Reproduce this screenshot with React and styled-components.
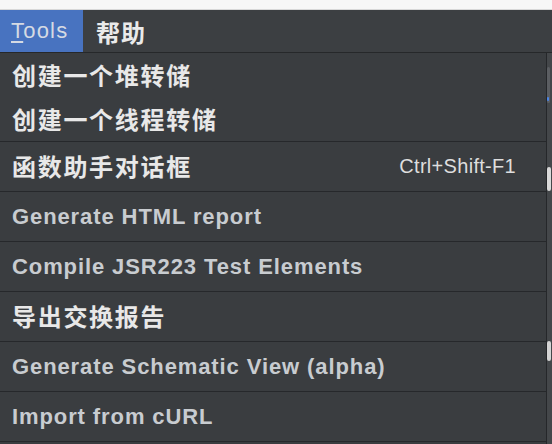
import React from "react";
import styled, { createGlobalStyle } from "styled-components";

const Global = createGlobalStyle`
  html, body { margin: 0; padding: 0; background: #3a3d40; }
  body { width: 552px; height: 444px; overflow: hidden; }
`;

const Page = styled.div`
  width: 552px;
  height: 444px;
  display: flex;
  flex-direction: column;
  background: #3a3d40;
  overflow: hidden;
`;

const TopStrip = styled.div`
  height: 10px;
  background: #f7f7f7;
  border-bottom: 1px solid #d8d8d8;
  box-sizing: border-box;
`;

const MenuBar = styled.div`
  height: 43px;
  display: flex;
  align-items: stretch;
  background: #3c3f42;
  border-bottom: 1px solid #26282a;
  box-sizing: border-box;
`;

const MenuTitle = styled.div`
  display: flex;
  align-items: center;
  padding: ${(p) => (p.$active ? "0 12px 0 11px" : "0 10px 0 13px")};
  width: ${(p) => (p.$active ? "83px" : "auto")};
  box-sizing: border-box;
  background: ${(p) => (p.$active ? "#4873c0" : "transparent")};
  color: ${(p) => (p.$active ? "#d5dae3" : "#eaeaea")};
  font-family: ${(p) =>
    p.$cjk
      ? '"Noto Sans CJK SC", sans-serif'
      : '"Liberation Sans", Arial, sans-serif'};
  font-weight: ${(p) => (p.$cjk ? 700 : 400)};
  font-size: ${(p) => (p.$cjk ? "24px" : "22px")};
  letter-spacing: ${(p) => (p.$cjk ? "1px" : "1.2px")};
`;

const Mnemonic = styled.span`
  text-decoration: underline;
  text-underline-offset: 3px;
`;

const Body = styled.div`
  flex: 1;
  display: flex;
  min-height: 0;
`;

const Dropdown = styled.div`
  width: 547px;
  display: flex;
  flex-direction: column;
  background: #3a3d40;
  border-right: 1px solid #25272a;
  box-sizing: border-box;
`;

const Group = styled.div`
  display: flex;
  flex-direction: column;
  border-bottom: 1px solid #26282b;
`;

const Item = styled.div`
  height: ${(p) => (p.$compact ? "44px" : "50px")};
  display: flex;
  align-items: center;
  justify-content: space-between;
  padding: 0 30px 0 12px;
  box-sizing: border-box;
  flex-shrink: 0;
  border-bottom: ${(p) => (p.$plain ? "none" : "1px solid #26282b")};
`;

const Label = styled.span`
  white-space: nowrap;
  font-family: ${(p) =>
    p.$cjk
      ? '"Noto Sans CJK SC", sans-serif'
      : '"Liberation Sans", Arial, sans-serif'};
  font-weight: 700;
  font-size: ${(p) => (p.$cjk ? "24px" : "22px")};
  letter-spacing: ${(p) => (p.$cjk ? "1.7px" : "0.9px")};
  color: ${(p) => (p.$cjk ? "#e8e8e8" : "#c8ccd0")};
  margin-top: ${(p) => (p.$cjk ? "-2px" : "0")};
`;

const Shortcut = styled.span`
  font-family: "Liberation Sans", Arial, sans-serif;
  font-size: 20px;
  color: #dedede;
  letter-spacing: 0.3px;
`;

const SideStrip = styled.div`
  flex: 1;
  background: #44474a;
  display: flex;
  flex-direction: column;
  align-items: flex-start;
`;

const SideBlock = styled.div`
  width: ${(p) => p.$w}px;
  height: ${(p) => p.$h}px;
  margin-top: ${(p) => p.$top}px;
  background: ${(p) => p.$c};
  border-radius: 2px;
`;

const groupOne = ["创建一个堆转储", "创建一个线程转储"];

const rows = [
  { label: "函数助手对话框", cjk: true, shortcut: "Ctrl+Shift-F1" },
  { label: "Generate HTML report" },
  { label: "Compile JSR223 Test Elements" },
  { label: "导出交换报告", cjk: true },
  { label: "Generate Schematic View (alpha)" },
  { label: "Import from cURL" },
];

export default function App() {
  return (
    <>
      <Global />
      <Page>
        <TopStrip />
        <MenuBar>
          <MenuTitle $active>
            <span>
              <Mnemonic>T</Mnemonic>ools
            </span>
          </MenuTitle>
          <MenuTitle $cjk>帮助</MenuTitle>
        </MenuBar>
        <Body>
          <Dropdown>
            <Group>
              {groupOne.map((t) => (
                <Item key={t} $compact $plain>
                  <Label $cjk>{t}</Label>
                </Item>
              ))}
            </Group>
            {rows.map((r) => (
              <Item key={r.label}>
                <Label $cjk={r.cjk}>{r.label}</Label>
                {r.shortcut && <Shortcut>{r.shortcut}</Shortcut>}
              </Item>
            ))}
          </Dropdown>
          <SideStrip>
            <SideBlock $w={3} $h={36} $top={14} $c="#5b5e62" />
            <SideBlock $w={2} $h={4} $top={-6} $c="#4a86e8" />
            <SideBlock $w={4} $h={24} $top={66} $c="#d9d9d9" />
            <SideBlock $w={4} $h={20} $top={150} $c="#d4d4d4" />
          </SideStrip>
        </Body>
      </Page>
    </>
  );
}
